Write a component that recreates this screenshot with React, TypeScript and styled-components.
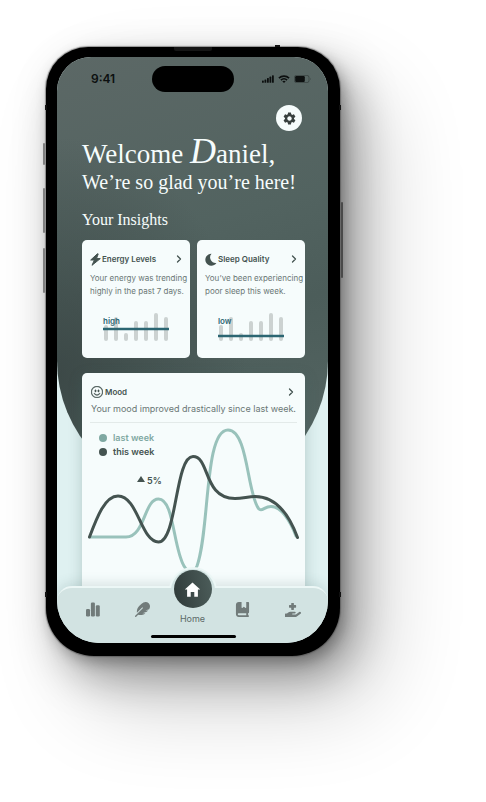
import React from 'react';
import styled, { createGlobalStyle } from 'styled-components';
import { FaFeather, FaHandHoldingMedical } from 'react-icons/fa';
import { FaBookBookmark } from 'react-icons/fa6';
import { MdSettings } from 'react-icons/md';
import { IoMdHome } from 'react-icons/io';
import { BsEmojiSmile } from 'react-icons/bs';
import { ChevronRight } from 'lucide-react';

const sans = "Inter, 'Liberation Sans', sans-serif";
const serif = "'Liberation Serif', 'DejaVu Serif', serif";
const colors = {
  card: '#f6fcfc',
  ink: '#445350',
  muted: '#6a7775',
  mint: '#99c2bb',
  teal: '#2c6672',
  nav: '#d2e3e2',
};

const GlobalStyle = createGlobalStyle`
  *, *::before, *::after { box-sizing: border-box; }
  body { margin: 0; background: #fff; font-family: ${sans}; }
  h1, h2, h3, p { margin: 0; font-weight: 400; }
  button { border: 0; padding: 0; background: none; font: inherit; color: inherit; cursor: pointer; }
  svg { display: block; }
`;

const Stage = styled.main`
  padding: 47px 146px 146px 46px;
  overflow: hidden;
`;

const Phone = styled.div`
  position: relative;
  min-width: 294px;
  padding: 10px 12px 13px 11px;
  background: #000;
  border-radius: 42px 42px 48px 48px;
  box-shadow:
    0 0 1px 1px rgba(70, 70, 70, 0.5),
    4px 6px 14px rgba(0, 0, 0, 0.26),
    14px 20px 44px rgba(0, 0, 0, 0.34),
    36px 46px 90px rgba(0, 0, 0, 0.2);
`;

const SideKey = styled.span<{ $side: 'left' | 'right'; $top: number; $length: number }>`
  position: absolute;
  ${(p) => p.$side}: -3px;
  top: ${(p) => p.$top}px;
  width: 2px;
  height: ${(p) => p.$length}px;
  border-radius: 1px;
  background: ${(p) => (p.$side === 'left' ? '#808080' : '#4a4a4a')};
`;

const Antenna = styled.span<{ $side: 'left' | 'right'; $top: number }>`
  position: absolute;
  ${(p) => p.$side}: -1px;
  top: ${(p) => p.$top}px;
  width: 2px;
  height: 5px;
  background: #111;
`;

const Earpiece = styled.span`
  position: absolute;
  top: 0;
  left: 50%;
  width: 38px;
  height: 4px;
  margin-left: -19px;
  border-radius: 0 0 2px 2px;
  background: #161616;
`;

const TopMark = styled.span`
  position: absolute;
  top: -2px;
  right: 60px;
  width: 5px;
  height: 2px;
  background: #111;
`;

const Screen = styled.div`
  position: relative;
  overflow: hidden;
  border-radius: 34px 34px 42px 42px;
  background: #dff1f1;
`;

const Backdrop = styled.div`
  position: absolute;
  inset: 0 0 auto;
  height: 439px;
  border-radius: 0 0 136px 136px;
  background:
    radial-gradient(ellipse 190px 240px at 0 320px, rgba(55, 66, 65, 0.75), rgba(62, 74, 72, 0)),
    linear-gradient(165deg, #5c6866 0%, #526360 40%, #4c5d5a 60%, #566764 100%);
`;

const StatusBar = styled.header`
  position: relative;
  display: grid;
  grid-template-columns: 1fr 82px 1fr;
  align-items: center;
  padding-top: 9px;
`;

const Time = styled.time`
  padding-left: 34px;
  font-size: 12px;
  font-weight: 600;
  line-height: 26px;
  color: #0c0f0f;
`;

const Island = styled.div`
  height: 26px;
  border-radius: 13px;
  background: #000;
`;

const StatusIcons = styled.div`
  display: flex;
  justify-content: flex-end;
  align-items: center;
  gap: 4px;
  padding-right: 17px;
`;

const Content = styled.div`
  position: relative;
  padding: 13px 23px 0 25px;
`;

const SettingsButton = styled.button`
  display: flex;
  align-items: center;
  justify-content: center;
  width: 26px;
  height: 26px;
  margin: 0 3px 0 auto;
  border-radius: 50%;
  background: ${colors.card};
  color: #38403f;
`;

const Greeting = styled.h1`
  margin-top: 9px;
  font-family: ${serif};
  font-size: 20px;
  line-height: 28px;
  white-space: nowrap;
  color: ${colors.card};
`;

const GreetingName = styled.span`
  display: block;
  font-size: 27px;
`;

const Initial = styled.span`
  font-size: 36px;
  font-style: italic;
  line-height: 1px;
`;

const SectionTitle = styled.h2`
  margin-top: 14px;
  font-family: ${serif};
  font-size: 16px;
  line-height: 20px;
  color: ${colors.card};
`;

const Card = styled.article`
  min-width: 0;
  padding: 12px 5px 17px 8px;
  border-radius: 5px;
  background: ${colors.card};
  color: ${colors.muted};
`;

const CardRow = styled.div`
  display: grid;
  grid-template-columns: repeat(2, minmax(0, 1fr));
  gap: 7px;
  margin-top: 10px;
`;

const CardHead = styled.div`
  display: flex;
  align-items: center;
  gap: 1px;
  height: 14px;
  color: ${colors.ink};
`;

const CardTitle = styled.h3`
  flex: 1;
  font-size: 8px;
  font-weight: 600;
  line-height: 14px;
  white-space: nowrap;
`;

const CardText = styled.p`
  margin-top: 6px;
  font-size: 8px;
  line-height: 13px;
  white-space: nowrap;
`;

const MiniChart = styled.figure`
  position: relative;
  width: 66px;
  margin: 15px 13px 0;
`;

const LevelLabel = styled.figcaption`
  position: absolute;
  top: 3px;
  left: 0;
  font-size: 8px;
  font-weight: 600;
  line-height: 10px;
  color: ${colors.teal};
`;

const MoodCard = styled(Card)`
  margin-top: 15px;
  padding: 12px 8px 27px;
  box-shadow: 0 4px 14px rgba(60, 100, 98, 0.28);
`;

const MoodHead = styled(CardHead)`
  gap: 2px;
  padding: 0 0 0 1px;
`;

const MoodText = styled.p`
  padding: 0 1px 6px;
  border-bottom: 1px solid #e3eae9;
  margin-top: 3px;
  font-size: 9px;
  line-height: 14px;
  white-space: nowrap;
`;

const MoodChart = styled.div`
  position: relative;
  padding-top: 8px;
`;

const Legend = styled.ul`
  margin: 0;
  padding: 0 0 0 9px;
  list-style: none;
`;

const LegendItem = styled.li<{ $color: string }>`
  display: flex;
  align-items: center;
  gap: 6px;
  font-size: 9px;
  font-weight: 600;
  line-height: 14px;
  color: ${(p) => p.$color};

  &::before {
    content: '';
    width: 8px;
    height: 8px;
    border-radius: 50%;
    background: currentColor;
  }
`;

const Change = styled.p`
  display: flex;
  align-items: center;
  gap: 2px;
  margin: 15px 0 0 47px;
  font-size: 9px;
  font-weight: 600;
  line-height: 14px;
  color: ${colors.ink};

  svg { margin-bottom: 4px; }
`;

const Curves = styled.svg`
  margin: -61px 0 0 -3px;
  overflow: visible;
`;

const Nav = styled.nav`
  position: relative;
  display: grid;
  grid-template-columns: repeat(5, 50px);
  justify-content: center;
  height: 57px;
  margin-top: -16px;
  border-top: 2px solid #ecf7f6;
  border-radius: 15px 15px 0 0;
  background: ${colors.nav};
  color: #717b7a;
  box-shadow: 0 -3px 12px rgba(60, 100, 98, 0.16);

  &::before {
    content: '';
    position: absolute;
    left: 50%;
    top: -21px;
    width: 48px;
    height: 48px;
    margin-left: -24px;
    border: 2px solid #ecf7f6;
    border-radius: 50%;
    background: ${colors.nav};
    clip-path: inset(0 0 27px 0);
  }
`;

const NavButton = styled.button`
  display: flex;
  justify-content: center;
  padding-top: 14px;
`;

const HomeButton = styled.button`
  position: relative;
  z-index: 1;
  display: flex;
  flex-direction: column;
  align-items: center;
  gap: 5px;
  margin-top: -18px;
  font-size: 9px;
  line-height: 12px;
  color: #5b6967;
`;

const HomeDisc = styled.span`
  display: flex;
  align-items: center;
  justify-content: center;
  width: 38px;
  height: 38px;
  border-radius: 50%;
  background: linear-gradient(80deg, #2f3a39, #4d5e5b);
  color: #fff;
`;

const HomeIndicator = styled.span`
  position: absolute;
  left: 50%;
  bottom: 5px;
  width: 85px;
  height: 3px;
  margin-left: -42px;
  border-radius: 2px;
  background: #000;
`;

const barHeights = [16, 24, 8, 20, 20, 28, 24];

const BoltIcon = () => (
  <svg width="11" height="13" viewBox="0 0 11 13" fill="currentColor" stroke="currentColor" strokeWidth="1" strokeLinejoin="round" aria-hidden="true">
    <path d="M7.500 0.700L0.700 7H4.400L2 12.300L10.300 5.600H6.500L8.200 0.900Z" />
  </svg>
);

const MoonIcon = () => (
  <svg width="12" height="13" viewBox="0 0 12 13" fill="currentColor" aria-hidden="true">
    <path d="M6.500 0.700A6 6 0 1 0 11.400 9.900A5.600 5.600 0 0 1 6.500 0.700Z" />
  </svg>
);

function LevelChart({ label, level }: { label: string; level: number }) {
  return (
    <MiniChart>
      <svg width="66" height="28" viewBox="0 0 66 28" aria-hidden="true">
        {barHeights.map((h, i) => (
          <rect key={i} x={1 + i * 10} y={28 - h} width="4" height={h} rx="2" fill="#ccd2d1" />
        ))}
        <path d={`M0 ${level}H66`} stroke={colors.teal} strokeWidth="2.4" />
      </svg>
      <LevelLabel>{label}</LevelLabel>
    </MiniChart>
  );
}

type InsightProps = { icon: React.ReactNode; title: string; lines: [string, string]; label: string; level: number };

function InsightCard({ icon, title, lines, label, level }: InsightProps) {
  return (
    <Card>
      <CardHead>
        {icon}
        <CardTitle>{title}</CardTitle>
        <button aria-label={`Open ${title}`}>
          <ChevronRight size={12} strokeWidth={2.6} />
        </button>
      </CardHead>
      <CardText>
        {lines[0]}
        <br />
        {lines[1]}
      </CardText>
      <LevelChart label={label} level={level} />
    </Card>
  );
}

export default function App() {
  return (
    <>
      <GlobalStyle />
      <Stage>
        <Phone>
          <SideKey $side="left" $top={96} $length={22} />
          <SideKey $side="left" $top={141} $length={45} />
          <SideKey $side="left" $top={201} $length={45} />
          <SideKey $side="right" $top={155} $length={76} />
          <Antenna $side="left" $top={58} />
          <Antenna $side="right" $top={58} />
          <Antenna $side="left" $top={545} />
          <Antenna $side="right" $top={545} />
          <Earpiece />
          <TopMark />
          <Screen>
            <Backdrop />
            <StatusBar>
              <Time>9:41</Time>
              <Island />
              <StatusIcons>
                <svg width="12" height="8" viewBox="0 0 12 8" fill="#0c0f0f" aria-hidden="true">
                  <rect x="0" y="5.5" width="1.8" height="2.3" rx="0.6" />
                  <rect x="2.5" y="4.4" width="1.8" height="3.4" rx="0.6" />
                  <rect x="5" y="3" width="1.8" height="4.8" rx="0.6" />
                  <rect x="7.5" y="1.6" width="1.8" height="6.2" rx="0.6" />
                  <rect x="10" y="0.3" width="1.8" height="7.5" rx="0.6" />
                </svg>
                <svg width="12" height="8" viewBox="0 0 12 8" fill="none" stroke="#0c0f0f" strokeWidth="1.6" aria-hidden="true">
                  <path d="M0.9 3.1C3.7 0.4 8.3 0.4 11.1 3.1" />
                  <path d="M2.9 5.1C4.6 3.4 7.4 3.4 9.1 5.1" />
                  <path d="M6 8L4.3 6.3C5.2 5.5 6.8 5.5 7.7 6.3Z" fill="#0c0f0f" stroke="none" />
                </svg>
                <svg width="17" height="8" viewBox="0 0 17 8" aria-hidden="true">
                  <rect x="0.4" y="0.4" width="14.6" height="7.2" rx="2" fill="none" stroke="#0c0f0f" strokeOpacity="0.4" strokeWidth="0.8" />
                  <rect x="1.2" y="1.1" width="9.6" height="5.8" rx="1.2" fill="#0c0f0f" />
                  <path d="M16 2.8Q17 4 16 5.2Z" fill="#0c0f0f" fillOpacity="0.45" />
                </svg>
              </StatusIcons>
            </StatusBar>
            <Content>
              <SettingsButton aria-label="Settings">
                <MdSettings size={15} />
              </SettingsButton>
              <Greeting>
                <GreetingName>
                  Welcome <Initial>D</Initial>aniel,
                </GreetingName>
                We’re so glad you’re here!
              </Greeting>
              <SectionTitle>Your Insights</SectionTitle>
              <CardRow>
                <InsightCard
                  icon={<BoltIcon />}
                  title="Energy Levels"
                  lines={['Your energy was trending', 'highly in the past 7 days.']}
                  label="high"
                  level={16}
                />
                <InsightCard
                  icon={<MoonIcon />}
                  title="Sleep Quality"
                  lines={['You’ve been experiencing', 'poor sleep this week.']}
                  label="low"
                  level={23}
                />
              </CardRow>
              <MoodCard>
                <MoodHead>
                  <BsEmojiSmile size={12} stroke="currentColor" strokeWidth={0.5} />
                  <CardTitle>Mood</CardTitle>
                  <button aria-label="Open Mood">
                    <ChevronRight size={12} strokeWidth={2.6} />
                  </button>
                </MoodHead>
                <MoodText>Your mood improved drastically since last week.</MoodText>
                <MoodChart>
                  <Legend>
                    <LegendItem $color="#7fa8a2">last week</LegendItem>
                    <LegendItem $color={colors.ink}>this week</LegendItem>
                  </Legend>
                  <Change>
                    <svg width="8" height="6" viewBox="0 0 8 6" aria-label="up">
                      <path d="M4 0L8 6H0Z" fill={colors.ink} />
                    </svg>
                    5%
                  </Change>
                  <Curves width="214" height="148" viewBox="87 427 214 148" fill="none" strokeWidth="3" strokeLinecap="round" aria-label="Mood over two weeks">
                    <path
                      stroke={colors.mint}
                      d="M90 537H126C145 537 144 499 158.500 499C174 499 173 547 184 566C188 573 194 573 197 566C210 530 204 430 228 430C248 430 247 493 258.500 508.500C262 512.500 264 506.500 271 506.500C281 506.500 290 520 296 536"
                    />
                    <path
                      stroke={colors.ink}
                      d="M89.500 537C97 517 105 496 118 496C138 496 141 542 158.500 542C177 542 175 456.500 193 456.500C210 456.500 203 498.500 235 498.500C243 498.500 248 496.500 255 496.500C277 496.500 290 517 297.500 537.500"
                    />
                  </Curves>
                </MoodChart>
              </MoodCard>
            </Content>
            <Nav>
              <NavButton aria-label="Statistics">
                <svg width="14" height="15" viewBox="0 0 14 15" fill="currentColor">
                  <rect x="0" y="7" width="4" height="7.500" rx="1.200" />
                  <rect x="4.900" y="0.500" width="4" height="14" rx="1.200" />
                  <rect x="9.800" y="3.200" width="4" height="11.300" rx="1.200" />
                </svg>
              </NavButton>
              <NavButton aria-label="Journal">
                <FaFeather size={15} />
              </NavButton>
              <HomeButton aria-current="page">
                <HomeDisc>
                  <IoMdHome size={19} />
                </HomeDisc>
                Home
              </HomeButton>
              <NavButton aria-label="Library">
                <FaBookBookmark size={15} />
              </NavButton>
              <NavButton aria-label="Care">
                <FaHandHoldingMedical size={16} />
              </NavButton>
              <HomeIndicator />
            </Nav>
          </Screen>
        </Phone>
      </Stage>
    </>
  );
}
